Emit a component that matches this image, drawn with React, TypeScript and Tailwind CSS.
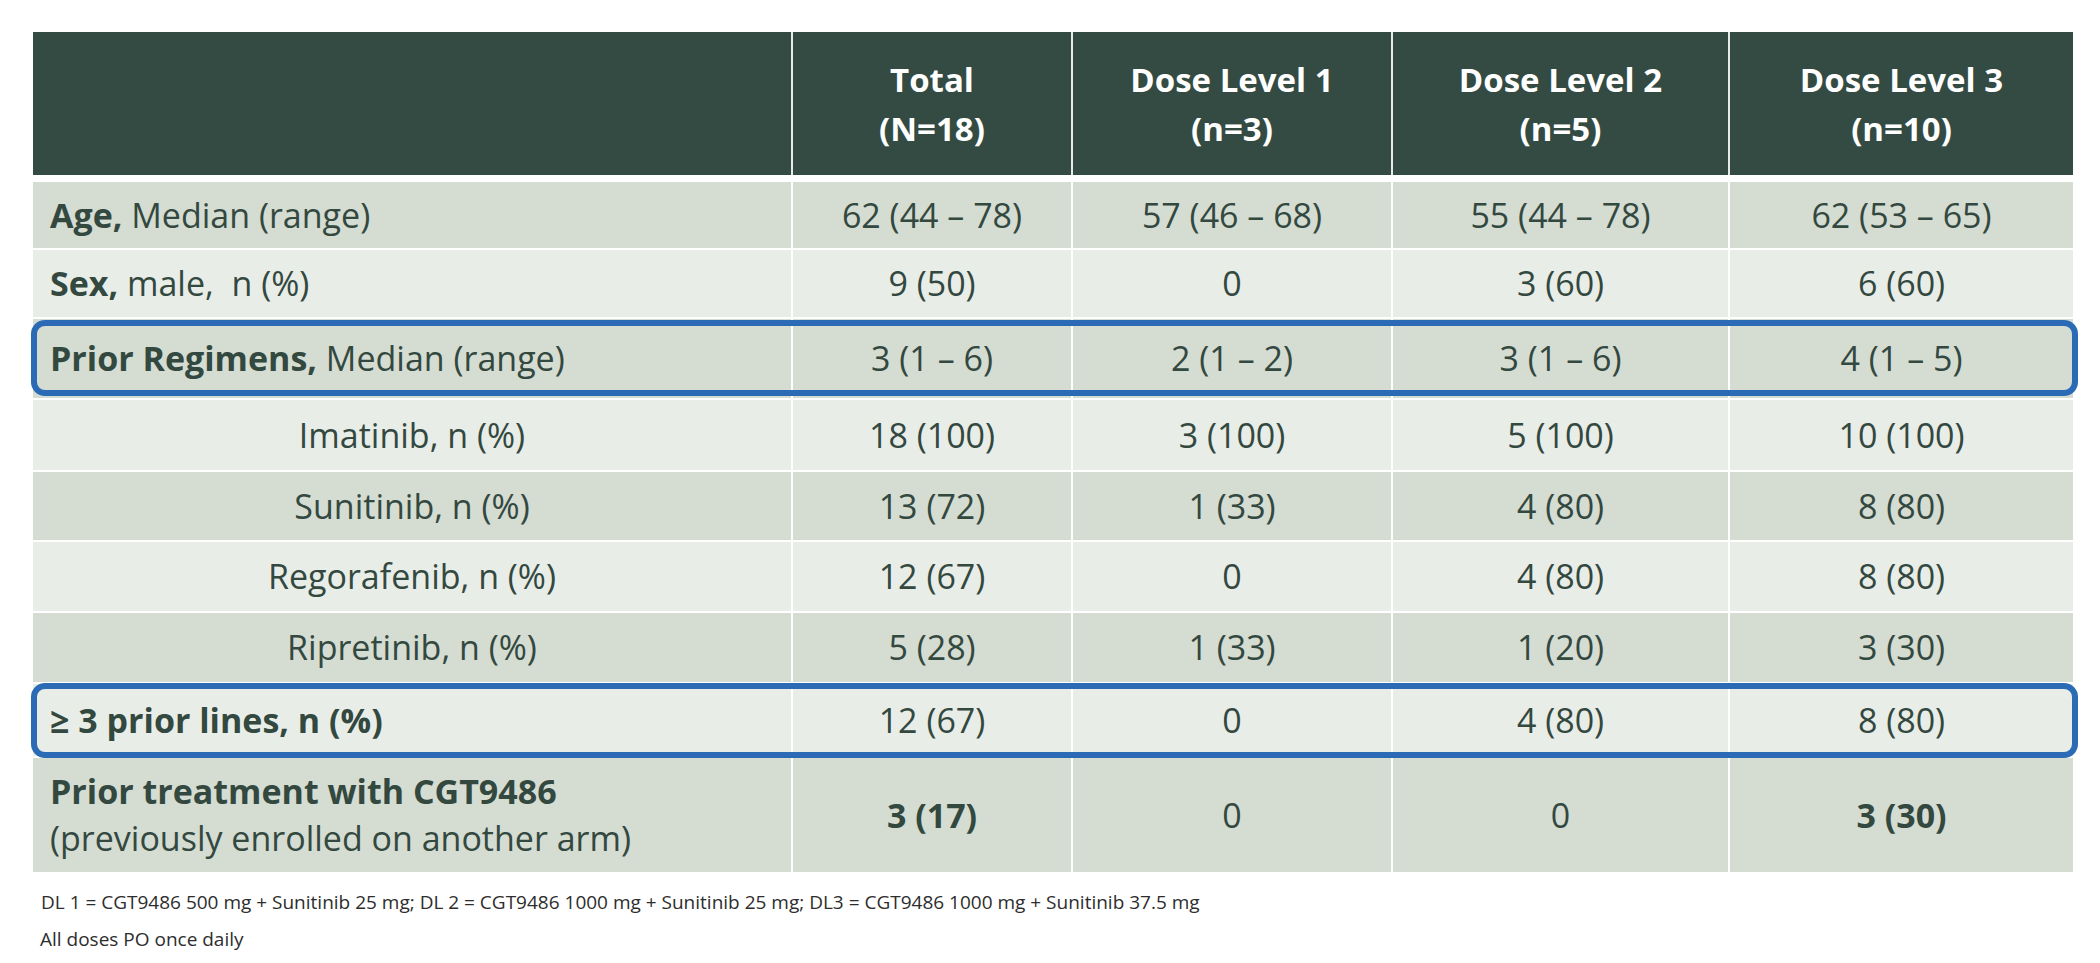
import React from 'react';

type Row = {
    label: React.ReactNode;
    values: string[];
    tone: 'dark' | 'light';
    h: string;
    indent?: boolean;
    boldValues?: boolean;
    boxed?: string;
};

const cols = ['w-[758px]', 'w-[280px]', 'w-[320px]', 'w-[337px]', 'w-[345px]'];

const heads = [
    ['Total', '(N=18)'],
    ['Dose Level 1', '(n=3)'],
    ['Dose Level 2', '(n=5)'],
    ['Dose Level 3', '(n=10)'],
];

const rows: Row[] = [
    { label: <><b>Age,</b> Median (range)</>, values: ['62 (44 – 78)', '57 (46 – 68)', '55 (44 – 78)', '62 (53 – 65)'], tone: 'dark', h: 'h-[66px]' },
    { label: <><b>Sex,</b> male,&nbsp; n (%)</>, values: ['9 (50)', '0', '3 (60)', '6 (60)'], tone: 'light', h: 'h-[67px]' },
    { label: <><b>Prior Regimens,</b> Median (range)</>, values: ['3 (1 – 6)', '2 (1 – 2)', '3 (1 – 6)', '4 (1 – 5)'], tone: 'dark', h: 'h-[79px]', boxed: 'top-[1px] bottom-[2px]' },
    { label: 'Imatinib, n (%)', values: ['18 (100)', '3 (100)', '5 (100)', '10 (100)'], tone: 'light', h: 'h-[70px]', indent: true },
    { label: 'Sunitinib, n (%)', values: ['13 (72)', '1 (33)', '4 (80)', '8 (80)'], tone: 'dark', h: 'h-[68px]', indent: true },
    { label: 'Regorafenib, n (%)', values: ['12 (67)', '0', '4 (80)', '8 (80)'], tone: 'light', h: 'h-[69px]', indent: true },
    { label: 'Ripretinib, n (%)', values: ['5 (28)', '1 (33)', '1 (20)', '3 (30)'], tone: 'dark', h: 'h-[69px]', indent: true },
    { label: <b>≥ 3 prior lines, n (%)</b>, values: ['12 (67)', '0', '4 (80)', '8 (80)'], tone: 'light', h: 'h-[72px]', boxed: '-top-[1px] -bottom-[2px]' },
    {
        label: (
            <span className="block leading-[47px]">
                <b>Prior treatment with CGT9486</b>
                <br />
                (previously enrolled on another arm)
            </span>
        ),
        values: ['3 (17)', '0', '0', '3 (30)'],
        tone: 'dark',
        h: 'h-[114px]',
        boldValues: true,
    },
];

export default function App() {
    return (
        <div className="min-h-screen bg-white pt-[32px] pl-[33px] text-[#33483f]" style={{ fontFamily: '"Open Sans", "Noto Sans", sans-serif' }}>
            <div className="w-[2040px]">
                {/* header */}
                <div className="flex h-[143px] bg-[#344b43]">
                    <div className={cols[0]} />
                    {heads.map((h, i) => (
                        <div key={i} className={`${cols[i + 1]} flex flex-col items-center justify-center border-l-2 border-[#e6ebe6] text-[33px] font-bold leading-[49px] text-white`}>
                            <span>{h[0]}</span>
                            <span>{h[1]}</span>
                        </div>
                    ))}
                </div>

                {/* body */}
                <div className="mt-[7px] flex flex-col gap-[2px]">
                    {rows.map((r, i) => {
                        const bg = r.tone === 'dark' ? 'bg-[#d5dcd2]' : 'bg-[#e9ede8]';
                        return (
                            <div key={i} className={`relative flex ${r.h} text-[34px]`}>
                                <div className={`${cols[0]} ${bg} flex items-center ${r.indent ? 'justify-center' : 'pl-[17px]'}`}>
                                    <span>{r.label}</span>
                                </div>
                                {r.values.map((v, j) => (
                                    <div key={j} className={`${cols[j + 1]} ${bg} flex items-center justify-center border-l-2 border-white ${r.boldValues && v !== '0' ? 'font-bold' : ''}`}>
                                        {v}
                                    </div>
                                ))}
                                {r.boxed && (
                                    <div className={`pointer-events-none absolute -left-[2px] -right-[5px] ${r.boxed} rounded-[14px] border-[6px] border-[#2b6bb6]`} />
                                )}
                            </div>
                        );
                    })}
                </div>

                {/* footnotes */}
                <div className="mt-[12px] pl-[8px] text-[19px] leading-[37px] text-[#2d2d2d]">
                    <p>DL 1 = CGT9486 500 mg + Sunitinib 25 mg; DL 2 = CGT9486 1000 mg + Sunitinib 25 mg; DL3 = CGT9486 1000 mg + Sunitinib 37.5 mg</p>
                    <p className="-ml-[1px]">All doses PO once daily</p>
                </div>
            </div>
        </div>
    );
}
